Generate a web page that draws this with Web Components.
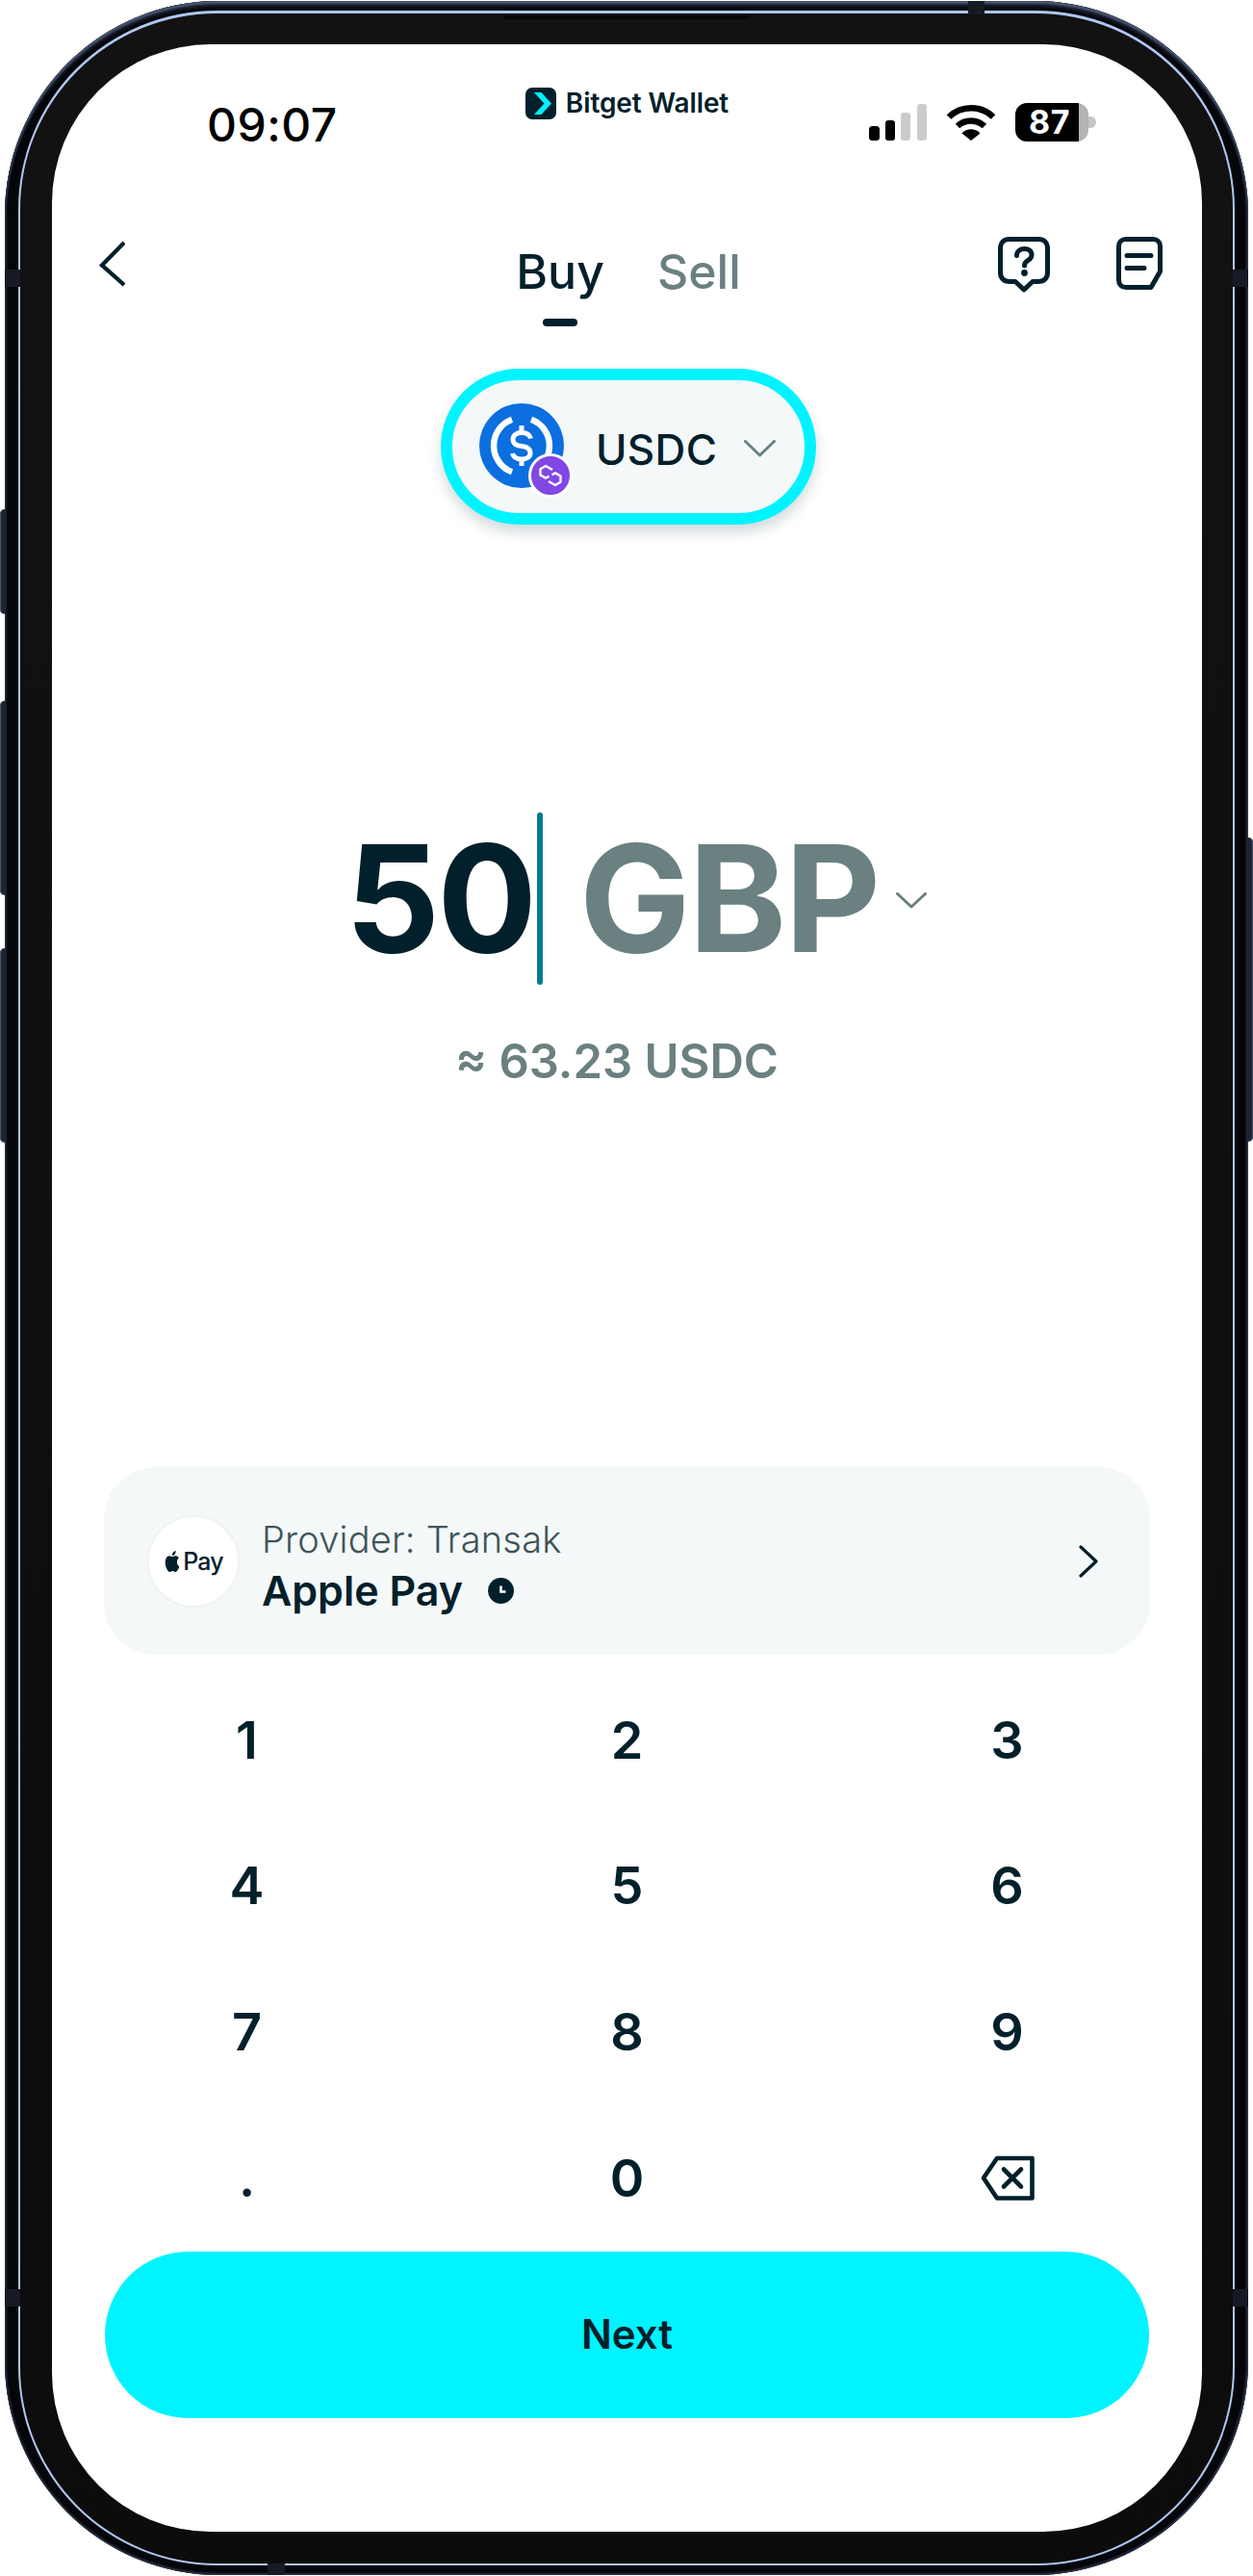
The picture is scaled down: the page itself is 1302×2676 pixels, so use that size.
<!DOCTYPE html>
<html lang="en">
<head>
<meta charset="utf-8">
<title>Bitget Wallet</title>
<style>
html,body{margin:0;padding:0;background:#fff}
body{font-family:Inter,"Noto Sans",sans-serif;color:#02202b;width:1302px;height:2676px;overflow:hidden}
</style>
</head>
<body>
<phone-frame>
  <status-bar></status-bar>
  <nav-header></nav-header>
  <token-pill symbol="USDC"></token-pill>
  <amount-display value="50" currency="GBP" quote="≈ 63.23 USDC"></amount-display>
  <provider-card provider="Provider: Transak" method="Apple Pay"></provider-card>
  <num-pad></num-pad>
  <next-button>Next</next-button>
</phone-frame>
<script>
function def(name, html, init){
  customElements.define(name, class extends HTMLElement{
    constructor(){super();this.attachShadow({mode:'open'}).innerHTML=html;}
    connectedCallback(){ if(init) init(this, this.shadowRoot); }
  });
}

def('phone-frame',`<style>
:host{display:block;position:relative;width:1302px;height:2676px;box-sizing:border-box;padding:1px 5px}
.body{box-sizing:border-box;height:2674px;border-radius:222px;padding:10px 14px;background:#04060a;
  box-shadow:inset 0 3px 2px #4a556e,inset 0 6px 3px #1a2030,inset 0 -2px 2px #2b3140,inset 2px 0 2px #1b2130,inset -2px 0 2px #2a3245}
.ring{box-sizing:border-box;height:2654px;border-radius:206px;border:2px solid #afc6ee;border-top-width:3px;padding:32px 32px 33px 33px;
  background:linear-gradient(#121212,#0c0c0c)}
.screen{box-sizing:border-box;height:2584px;border-radius:165px;background:#fff;overflow:hidden;display:flex;flex-direction:column}
.b{position:absolute;background:#161a24}
.btn{position:absolute;width:6px;background:#1c2230;box-shadow:inset 1px 0 1px #4b5873}
.speaker{position:absolute;left:523px;top:16px;width:255px;height:4px;background:#060606;border-radius:2px}
</style>
<div class="body"><div class="ring"><div class="screen"><slot></slot></div></div></div>
<div class="speaker"></div>
<div class="b" style="left:1006px;top:1px;width:17px;height:14px"></div>
<div class="b" style="left:5px;top:280px;width:16px;height:18px"></div>
<div class="b" style="left:1281px;top:280px;width:16px;height:18px"></div>
<div class="b" style="left:5px;top:2378px;width:16px;height:18px"></div>
<div class="b" style="left:1281px;top:2378px;width:16px;height:18px"></div>
<div class="b" style="left:278px;top:2663px;width:18px;height:12px"></div>
<div class="btn" style="left:0;top:529px;height:109px;border-radius:5px 0 0 5px"></div>
<div class="btn" style="left:0;top:728px;height:202px;border-radius:5px 0 0 5px"></div>
<div class="btn" style="left:0;top:985px;height:202px;border-radius:5px 0 0 5px"></div>
<div class="btn" style="left:1296px;top:870px;height:316px;border-radius:0 5px 5px 0;box-shadow:inset -1px 0 1px #4b5873"></div>`);

def('status-bar',`<style>
:host{display:grid;grid-template-columns:1fr auto 1fr;height:194px;align-items:start;color:#000}
.time{padding:51px 0 0 161px;font:500 48px/66px Inter,sans-serif;color:#000;letter-spacing:.5px}
.logo{display:flex;align-items:center;gap:10px;padding-top:45px;color:#02202b;font:600 28px/33px Inter,sans-serif;letter-spacing:-.1px}
.right{display:flex;justify-content:flex-end;align-items:center;padding:61px 110px 0 0;gap:20px}
.batt{box-sizing:border-box;width:76px;height:40px;border-radius:12px;background:linear-gradient(90deg,#000 66px,#b4b4b4 66px);color:#fff;font:700 34px/40px Inter,sans-serif;padding-left:14px;letter-spacing:.5px}
.bw{display:flex;align-items:center}
.nub{width:8px;height:12px;background:#c4c4c4;border-radius:0 6px 6px 0}
</style>
<div class="time">09:07</div>
<div class="logo"><svg width="32" height="33" viewBox="0 0 32 33"><rect width="32" height="33" rx="7" fill="#02202b"/><path d="M9 5H16.5L27 16.5L16.5 28H9L19.5 16.5Z" fill="#00f0ff"/></svg><span>Bitget Wallet</span></div>
<div class="right">
<svg width="60" height="38" viewBox="0 0 60 38"><rect x="0" y="23" width="11" height="15" rx="3.5" fill="#000"/><rect x="17" y="17" width="10" height="21" rx="3" fill="#000"/><rect x="33" y="9" width="10" height="29" rx="3" fill="#ccc"/><rect x="50" y="0" width="10" height="38" rx="3" fill="#ccc"/></svg>
<svg width="52" height="38" viewBox="0 0 52 38" fill="none"><path d="M3 13.5A33 33 0 0 1 49 13.5" stroke="#000" stroke-width="6.5"/><path d="M12 23A20.5 20.5 0 0 1 40 23" stroke="#000" stroke-width="6.5"/><path d="M26 38L16.5 30.5A13 13 0 0 1 35.5 30.5Z" fill="#000"/></svg>
<div class="bw"><div class="batt">87</div><div class="nub"></div></div>
</div>`);

def('nav-header',`<style>
:host{display:grid;grid-template-columns:1fr auto 1fr;height:100px;align-items:start;box-sizing:border-box;padding-left:3px}
.back{margin:10px 0 0 46px}
.tabs{display:flex;gap:55px;color:#6b8080;font:500 50px/56px Inter,sans-serif}
.tab{display:flex;flex-direction:column;align-items:center;padding-top:14px}
.tab.on{color:#02202b}
.bar{width:36px;height:8px;border-radius:4px;background:#02202b;margin-top:21px}
.icons{display:flex;justify-content:flex-end;gap:69px;padding:6px 41px 0 0;align-items:flex-start}
svg{display:block}
</style>
<div><svg class="back" width="27" height="48" viewBox="0 0 27 48" fill="none"><path d="M26 2L3 25.5L26 46" stroke="#02202b" stroke-width="4.2"/></svg></div>
<div class="tabs"><div class="tab on"><span>Buy</span><div class="bar"></div></div><div class="tab"><span>Sell</span></div></div>
<div class="icons">
<svg width="54" height="58" viewBox="0 0 54 58" fill="none" stroke="#02202b" stroke-width="5" stroke-linejoin="round"><path d="M12 2.5H42C48 2.5 51.5 6 51.5 12V37C51.5 43 48 46.5 42 46.5H36L27 55L18 46.5H12C6 46.5 2.5 43 2.5 37V12C2.5 6 6 2.5 12 2.5Z"/><path d="M19.5 19.5C19.5 15 23 12.5 27.5 12.5S35 15 35 19C35 22 33 23.5 31 24.7S27.5 27 27.5 30" stroke-width="5" stroke-linecap="round"/><circle cx="27.5" cy="37.5" r="3.4" fill="#02202b" stroke="none"/></svg>
<svg width="48" height="55" viewBox="0 0 48 55" fill="none" stroke="#02202b" stroke-width="5" stroke-linejoin="round" stroke-linecap="round"><path d="M10 2.5H38C42.5 2.5 45.5 5.5 45.5 10V36L36 52.5H10C5.5 52.5 2.5 49.5 2.5 45V10C2.5 5.5 5.5 2.5 10 2.5Z"/><path d="M11 19.5H36M11 32.5H29"/></svg>
</div>`);

def('token-pill',`<style>
:host{display:block;margin-top:43px;padding-left:3px}
.pill{box-sizing:border-box;width:390px;height:162px;margin:0 auto;border-radius:81px;border:12px solid #00f4ff;background:#f4f8f9;display:flex;align-items:center;padding-left:28px;box-shadow:0 8px 14px rgba(0,50,60,.18)}
.ic{position:relative;width:88px;height:88px;flex:none;margin-right:33px;margin-top:-2px}
.ic svg.b{position:absolute;right:-9px;bottom:-10px}
svg{display:block}
.t{font:500 44px/56px Inter,sans-serif;color:#02202b;margin-right:28px;padding-top:5px;letter-spacing:.3px}
.ch{margin-top:4px}
</style>
<div class="pill"><div class="ic">
<svg width="88" height="88" viewBox="0 0 88 88" fill="none"><circle cx="44" cy="44" r="44" fill="#0b6fe0"/><path d="M34 16.8A29 29 0 0 0 34 71.2M54 16.8A29 29 0 0 1 54 71.2" stroke="#fff" stroke-width="6.5"/><path d="M53.5 36.5C52.5 32.5 48.5 30.5 44 30.5C39 30.5 35 33 35 37.5C35 42.5 39 44 44 44.5C49 45 53 47 53 51.5C53 56 49 58 44 58C39 58 35.5 56 34.5 52" stroke="#fff" stroke-width="5"/><path d="M44 23V30M44 58V65" stroke="#fff" stroke-width="5"/></svg>
<svg class="b" width="46" height="46" viewBox="0 0 46 46" fill="none"><circle cx="23" cy="23" r="21.5" fill="#8247e5" stroke="#fff" stroke-width="3"/><path d="M25 17L18 13L12.5 16.2V22.5L18 25.6L21.5 23.7M21 29L28 33L33.5 29.8V23.5L28 20.4L24.5 22.3" stroke="#fff" stroke-width="2.4" stroke-linejoin="round"/></svg>
</div><span class="t"></span><svg class="ch" width="33" height="18" viewBox="0 0 33 18" fill="none"><path d="M1.5 1.5L16.5 16L31.5 1.5" stroke="#6b8080" stroke-width="3" stroke-linecap="round" stroke-linejoin="round"/></svg></div>`,(h,s)=>{s.querySelector('.t').textContent=h.getAttribute('symbol');});

def('amount-display',`<style>
:host{display:block;margin-top:299px}
.row{display:flex;align-items:center;justify-content:center;padding-left:19px;height:179px}
.v,.c{font:700 154px/179px Inter,sans-serif;letter-spacing:-3px}
.v{color:#02202b}
.c{color:#6b8080;margin:0 18px 0 38px;letter-spacing:-2px}
.caret{width:6px;height:179px;border-radius:3px;background:#007a94;margin-left:3px}
.q{font:600 49px/60px Inter,sans-serif;color:#6b8080;text-align:center;padding-right:21px;margin-top:50px}
svg{display:block;margin-top:4px}
</style>
<div class="row"><span class="v"></span><div class="caret"></div><span class="c"></span><svg width="32" height="17" viewBox="0 0 32 17" fill="none"><path d="M1.5 1.5L16 15L30.5 1.5" stroke="#6b8080" stroke-width="3" stroke-linecap="round" stroke-linejoin="round"/></svg></div>
<div class="q"></div>`,(h,s)=>{s.querySelector('.v').textContent=h.getAttribute('value');s.querySelector('.c').textContent=h.getAttribute('currency');s.querySelector('.q').textContent=h.getAttribute('quote');});

def('provider-card',`<style>
:host{display:block;margin:391px 54px 0 54px}
.card{box-sizing:border-box;height:195px;border-radius:54px;background:#f4f8f9;display:flex;align-items:center;padding:0 54px 0 45px}
.logo{box-sizing:border-box;flex:none;width:96px;height:96px;border-radius:50%;background:#fff;border:2px solid #eef3f4;display:flex;align-items:center;justify-content:center;gap:2px;margin-right:23px;font:500 25px/30px Inter,sans-serif;color:#02202b;letter-spacing:-.8px}
.txt{flex:1;padding-top:11px}
.p{font:300 38px/46px Inter,sans-serif;color:#3f5457;letter-spacing:.2px}
.m{display:flex;align-items:center;gap:26px;font:600 43px/52px Inter,sans-serif;color:#02202b;margin-top:4px}
svg{display:block}
</style>
<div class="card"><div class="logo"><svg width="18" height="22" viewBox="0 0 24 24" fill="#02202b" preserveAspectRatio="none"><path d="M12.152 6.896c-.948 0-2.415-1.078-3.96-1.04-2.04.027-3.91 1.183-4.961 3.014-2.117 3.675-.546 9.103 1.519 12.09 1.013 1.454 2.208 3.09 3.792 3.039 1.52-.065 2.09-.987 3.935-.987 1.831 0 2.35.987 3.96.948 1.637-.026 2.676-1.48 3.676-2.948 1.156-1.688 1.636-3.325 1.662-3.415-.039-.013-3.182-1.221-3.22-4.857-.026-3.04 2.48-4.494 2.597-4.559-1.429-2.09-3.623-2.324-4.39-2.376-2-.156-3.675 1.09-4.61 1.09zM15.53 3.83c.843-1.012 1.4-2.427 1.245-3.83-1.207.052-2.662.805-3.532 1.818-.78.896-1.454 2.338-1.273 3.714 1.338.104 2.715-.688 3.559-1.701"/></svg><span>Pay</span></div>
<div class="txt"><div class="p"></div><div class="m"><span class="mm"></span><svg width="27" height="27" viewBox="0 0 27 27"><circle cx="13.5" cy="13.5" r="13.5" fill="#02202b"/><path d="M13.5 8.5V14.5H18.5" fill="none" stroke="#fff" stroke-width="2.6"/></svg></div></div>
<svg width="20" height="34" viewBox="0 0 20 34" fill="none"><path d="M2 2L18 17L2 32" stroke="#02202b" stroke-width="3.2" stroke-linecap="round" stroke-linejoin="round"/></svg></div>`,(h,s)=>{s.querySelector('.p').textContent=h.getAttribute('provider');s.querySelector('.mm').textContent=h.getAttribute('method');});

def('num-pad',`<style>
:host{display:grid;grid-template-columns:repeat(3,395px);grid-auto-rows:151.67px;justify-content:center;margin-top:13px;font:600 54px/1 Inter,sans-serif;color:#02202b}
.k{display:flex;align-items:center;justify-content:center}
svg{display:block}
</style>`,(h,s)=>{
  ['1','2','3','4','5','6','7','8','9','.','0'].forEach(t=>{const d=document.createElement('div');d.className='k';d.textContent=t;s.appendChild(d);});
  const d=document.createElement('div');d.className='k';
  d.innerHTML='<svg width="56" height="47" viewBox="0 0 56 47" fill="none" stroke="#02202b" stroke-width="4.6" stroke-linejoin="round" stroke-linecap="round"><path d="M17 3H53.5V44.5H17L3 23.5Z"/><path d="M24 14.5L42 32.5M42 14.5L24 32.5"/></svg>';
  s.appendChild(d);
});

def('next-button',`<style>
:host{display:block;margin:0 55px 0 55px}
.b{height:173px;border-radius:87px;background:#00f4ff;display:flex;align-items:center;justify-content:center;font:600 42px/52px Inter,sans-serif;color:#02202b}
</style><div class="b"><slot></slot></div>`);
</script>
</body>
</html>
